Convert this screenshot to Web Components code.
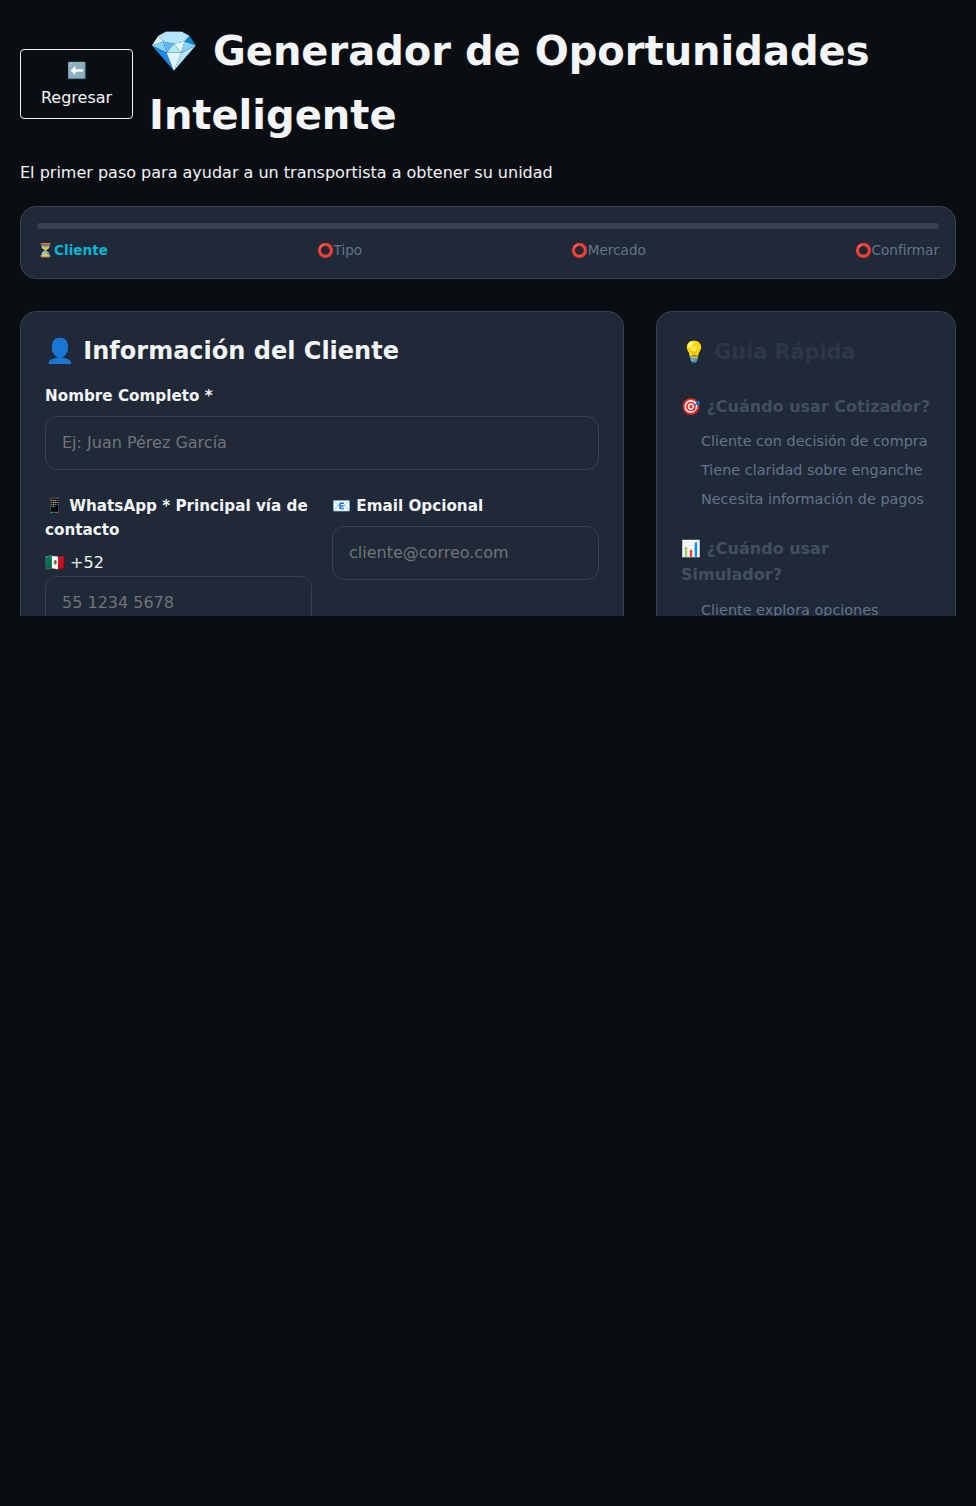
<!DOCTYPE html>
<html lang="es">
<head>
<meta charset="utf-8">
<title>Generador de Oportunidades Inteligente</title>
<style>
html, body { margin: 0; background: #0a0e12; }
body { font-family: "DejaVu Sans", sans-serif; line-height: 1.6; color: #f3f4f6; height: 1506px; }
</style>
</head>
<body>
<opportunity-page>
  <page-header slot="header" subtitle="El primer paso para ayudar a un transportista a obtener su unidad">⬅️</page-header>
  <step-progress slot="steps">
    <step-item icon="⏳" active>Cliente</step-item>
    <step-item icon="⭕">Tipo</step-item>
    <step-item icon="⭕">Mercado</step-item>
    <step-item icon="⭕">Confirmar</step-item>
  </step-progress>
  <client-card slot="main">
    <form-field label="Nombre Completo *" placeholder="Ej: Juan Pérez García"></form-field>
    <div class="form-row" style="display:grid;grid-template-columns:1fr 1fr;gap:20px;align-items:start">
      <form-field label="📱 WhatsApp * Principal vía de contacto" prefix="🇲🇽 +52" placeholder="55 1234 5678"></form-field>
      <form-field label="📧 Email Opcional" placeholder="cliente@correo.com"></form-field>
    </div>
  </client-card>
  <guide-panel slot="side">
    <guide-section heading="🎯 ¿Cuándo usar Cotizador?">
      <li>Cliente con decisión de compra</li>
      <li>Tiene claridad sobre enganche</li>
      <li>Necesita información de pagos</li>
    </guide-section>
    <guide-section heading="📊 ¿Cuándo usar Simulador?" style="--list-gap: 9px">
      <li>Cliente explora opciones</li>
    </guide-section>
  </guide-panel>
</opportunity-page>

<script>
"use strict";

function shadow(el, html) {
    el.attachShadow({mode: 'open'}).innerHTML = html;
}

class OpportunityPage extends HTMLElement {
    constructor() {
        super();
        shadow(this, `<style>
:host { display: block; height: 616px; overflow: hidden; padding: 20px 20px 0; box-sizing: border-box; }
.layout { display: grid; grid-template-columns: 1fr 300px; gap: 32px; margin-top: 32px; }
</style>
<slot name="header"></slot>
<slot name="steps"></slot>
<div class="layout"><slot name="main"></slot><slot name="side"></slot></div>`);
    }
}

class PageHeader extends HTMLElement {
    constructor() {
        super();
        shadow(this, `<style>
:host { display: block; margin-bottom: 20px; }
.top { display: flex; align-items: flex-start; gap: 16px; margin-bottom: 13px; }
.back { flex: none; width: 113px; height: 70px; margin-top: 29px; padding-top: 1px; box-sizing: border-box; border: 1px solid #f3f4f6; border-radius: 4px;
    display: flex; flex-direction: column; gap: 1px; align-items: center; justify-content: center; font-size: 16px; line-height: 25.6px; color: #f3f4f6; }
h1 { margin: -1px 0 0; font-size: 40px; line-height: 64px; font-weight: 700; color: #f3f4f6; }
p { margin: 0; font-size: 16px; line-height: 25.6px; color: #f3f4f6; }
</style>
<div class="top">
  <div class="back"><span><slot></slot></span><span>Regresar</span></div>
  <h1>💎 Generador de Oportunidades Inteligente</h1>
</div>
<p>${this.getAttribute('subtitle')}</p>`);
    }
}

class StepProgress extends HTMLElement {
    constructor() {
        super();
        shadow(this, `<style>
:host { display: block; background: #1f2937; border: 1px solid #374151; border-radius: 16px; padding: 16px; }
.bar { height: 6px; background: #374151; border-radius: 3px; margin-bottom: 11.2px; }
.steps { display: flex; justify-content: space-between; }
</style>
<div class="bar"></div>
<div class="steps"><slot></slot></div>`);
    }
}

class StepItem extends HTMLElement {
    constructor() {
        super();
        shadow(this, `<style>
:host { display: block; font-size: 13.6px; line-height: 21.76px; color: #64748b; }
:host([active]) { color: #06b6d4; font-weight: 700; }
</style>
<span>${this.getAttribute('icon')}</span><slot></slot>`);
    }
}

class ClientCard extends HTMLElement {
    constructor() {
        super();
        shadow(this, `<style>
:host { display: block; background: #1f2937; border: 1px solid #374151; border-radius: 16px; padding: 24px; }
h2 { margin: 0 0 17px; font-size: 24px; line-height: 31px; font-weight: 700; color: #f3f4f6; }
</style>
<h2>👤 Información del Cliente</h2>
<slot></slot>`);
    }
}

class FormField extends HTMLElement {
    constructor() {
        super();
        let prefix = this.getAttribute('prefix');
        shadow(this, `<style>
:host { display: block; margin-bottom: 24px; }
label { display: block; font-size: 15.2px; line-height: 24px; font-weight: 700; color: #f3f4f6; margin-bottom: 8px; }
.prefix { font-size: 16px; line-height: 26px; color: #f3f4f6; }
input { display: block; width: 100%; box-sizing: border-box; height: 54px; padding: 0 16px; background: #1f2937; border: 1px solid #374151;
    border-radius: 12px; font: 16px "DejaVu Sans", sans-serif; color: #f3f4f6; outline: none; }
input::placeholder { color: #717478; opacity: 1; }
</style>
<label>${this.getAttribute('label')}</label>
${prefix ? `<div class="prefix">${prefix}</div>` : ''}
<input type="text" placeholder="${this.getAttribute('placeholder')}">`);
    }
}

class GuidePanel extends HTMLElement {
    constructor() {
        super();
        shadow(this, `<style>
:host { display: block; background: #1f2937; border: 1px solid #374151; border-radius: 16px; padding: 24px; }
h3 { margin: 0 0 25px; font-size: 20.8px; line-height: 33.28px; font-weight: 700; color: #2d3748; }
</style>
<h3>💡 Guía Rápida</h3>
<slot></slot>`);
    }
}

class GuideSection extends HTMLElement {
    constructor() {
        super();
        shadow(this, `<style>
:host { display: block; margin-bottom: 21.8px; }
h4 { margin: 0 0 var(--list-gap, 7.6px); font-size: 16px; line-height: 25.6px; font-weight: 700; color: #434e60; }
ul { margin: 0; padding: 0 0 0 20px; list-style: none; }
::slotted(li) { font-size: 14.4px; line-height: 23.04px; padding: 3px 0; color: #64748b; list-style: none; }
</style>
<h4>${this.getAttribute('heading')}</h4>
<ul><slot></slot></ul>`);
    }
}

customElements.define('opportunity-page', OpportunityPage);
customElements.define('page-header', PageHeader);
customElements.define('step-progress', StepProgress);
customElements.define('step-item', StepItem);
customElements.define('client-card', ClientCard);
customElements.define('form-field', FormField);
customElements.define('guide-panel', GuidePanel);
customElements.define('guide-section', GuideSection);
</script>
</body>
</html>
